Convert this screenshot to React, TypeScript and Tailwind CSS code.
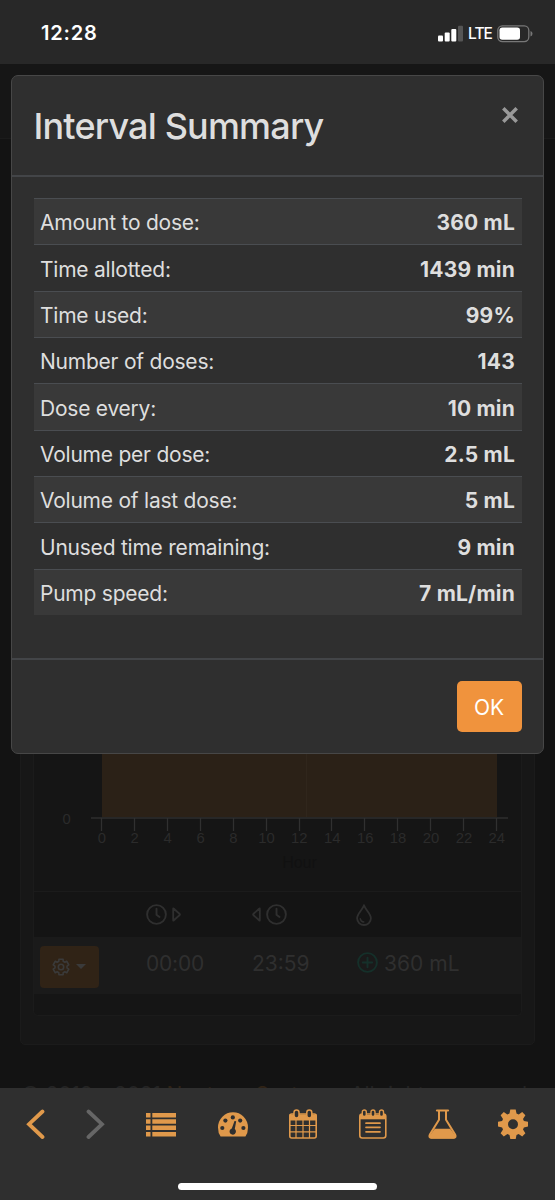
import React from "react";

const rows: [string, string][] = [
  ["Amount to dose:", "360 mL"],
  ["Time allotted:", "1439 min"],
  ["Time used:", "99%"],
  ["Number of doses:", "143"],
  ["Dose every:", "10 min"],
  ["Volume per dose:", "2.5 mL"],
  ["Volume of last dose:", "5 mL"],
  ["Unused time remaining:", "9 min"],
  ["Pump speed:", "7 mL/min"],
];

const hours = [0, 2, 4, 6, 8, 10, 12, 14, 16, 18, 20, 22, 24];

// Six-toothed outline of the settings cog, centred on the origin.
const cogPoints = Array.from({ length: 6 }, (_, i) => i * 60 - 90)
  .flatMap((a) => [
    [a - 21, 6.1],
    [a - 15, 8.1],
    [a + 15, 8.1],
    [a + 21, 6.1],
  ])
  .map(([a, r]) => {
    const t = (a * Math.PI) / 180;
    return `${(r * Math.cos(t)).toFixed(2)},${(r * Math.sin(t)).toFixed(2)}`;
  })
  .join(" ");

function Clock() {
  return (
    <svg width="21" height="21" viewBox="0 0 21 21" fill="none" stroke="currentColor" strokeWidth="1.900" strokeLinecap="round" className="shrink-0">
      <circle cx="10.500" cy="10.500" r="9.400" />
      <path d="M10.500 4.800v6l3 2.200" />
    </svg>
  );
}

function Caret({ className }: { className: string }) {
  return (
    <svg width="9" height="15" viewBox="0 0 9 15" fill="none" stroke="currentColor" strokeWidth="1.800" strokeLinejoin="round" className={className}>
      <path d="M1.200 1.500q0-.4.400 0L7.700 7q.4.500 0 1L1.600 13.500q-.4.400-.4 0Z" />
    </svg>
  );
}

function StatusBar() {
  return (
    <header className="flex h-16 shrink-0 items-start justify-between bg-[#282828] pl-[41px] pr-[22px] pt-5 text-white">
      <span className="text-[20px] font-semibold leading-[27px] tracking-[0.800px]">12:28</span>
      <div className="flex h-[27px] items-center">
        <svg width="26" height="17" viewBox="0 0 26 17" className="mr-[4px]">
          <rect x="0" y="10.5" width="5" height="6" rx="1" fill="#fff" />
          <rect x="6.7" y="7.5" width="5" height="9" rx="1" fill="#fff" />
          <rect x="13.3" y="4" width="5" height="12.5" rx="1" fill="#fff" />
          <rect x="20" y="0.7" width="5" height="15.8" rx="1" fill="#555" />
        </svg>
        <span className="w-[29px] text-[15.500px] font-medium leading-[27px] tracking-[-0.900px]">LTE</span>
        <svg width="36" height="18" viewBox="0 0 36 18">
          <rect x="0.8" y="0.8" width="31" height="15.8" rx="4.5" fill="none" stroke="#777" strokeWidth="1.3" />
          <rect x="2.5" y="2.5" width="20.5" height="12.3" rx="2.8" fill="#fff" />
          <path d="M33.5 6v5.500q2-.7 2-2.750T33.500 6Z" fill="#777" />
        </svg>
      </div>
    </header>
  );
}

function Chart() {
  return (
    <svg width="487" height="172" viewBox="34 720 487 172" className="block" fontFamily="Liberation Sans, sans-serif">
      <rect x="102" y="720" width="395" height="98" fill="#2b2117" />
      <path d="M306.500 720V818" stroke="#30261c" />
      <path d="M91 819H508" stroke="#2e2e2e" strokeWidth="1.600" />
      {hours.map((h) => (
        <React.Fragment key={h}>
          <path d={`M${Math.round(101 + h * 16.46) + 0.5} 819v13`} stroke="#303030" strokeWidth="1.300" />
          <text x={101.800 + h * 16.46} y="844" fontSize="14.800" textAnchor="middle" fill="#2b2b2b">
            {h}
          </text>
        </React.Fragment>
      ))}
      <text x="66.700" y="825.300" fontSize="14.800" textAnchor="middle" fill="#2b2b2b">0</text>
      <text x="299.500" y="869" fontSize="16" textAnchor="middle" fill="#111">Hour</text>
    </svg>
  );
}

function Page() {
  return (
    <div className="flex h-full flex-col bg-[#131313] text-[#2f2f2f]">
      <div className="h-[75px] shrink-0 border-b border-[#1b1b1b] bg-[#161616]" />
      <div className="mx-5 flex h-[906px] shrink-0 flex-col justify-end rounded-[5px] border border-[#1b1b1b] bg-[#171717] px-3 pb-[28px]">
        <div className="rounded-b-[5px] border border-t-0 border-[#1b1b1b] bg-[#151515]">
          <Chart />
          <div className="flex h-[46px] items-center border-t border-[#1b1b1b] bg-[#141414] pl-[112px]">
            <div className="flex w-[106px] items-center gap-[5px]">
              <Clock />
              <Caret className="shrink-0" />
            </div>
            <div className="flex w-[105px] items-center gap-[5px]">
              <Caret className="shrink-0 rotate-180" />
              <Clock />
            </div>
            <svg width="16" height="22" viewBox="0 0 16 22" fill="none" stroke="currentColor" strokeWidth="1.800" strokeLinejoin="round" strokeLinecap="round" className="-ml-px">
              <path d="M8 1.200C6.500 6 1.100 9.500 1.100 14.300a6.900 6.700 0 0 0 13.800 0C14.900 9.500 9.500 6 8 1.200Z" />
              <path d="M4.300 14.800q.6 2.900 3.500 3.200" strokeWidth="1.400" />
            </svg>
          </div>
          <div className="flex h-[57px] items-center bg-[#1a1a1a] pl-1.5 text-[21px]">
            <div className="mt-[2px] flex h-[42px] w-[59px] shrink-0 items-center rounded bg-[#302316] pl-[12px] text-[#3a3a3a]">
              <svg width="18" height="18" viewBox="-9 -9 18 18" fill="none" stroke="currentColor" strokeWidth="1.600" strokeLinejoin="round" className="shrink-0">
                <polygon points={cogPoints} />
                <circle r="2.700" />
              </svg>
              <span className="ml-[6px] h-0 w-0 border-x-[5px] border-t-[5px] border-x-transparent border-t-current" />
            </div>
            <span className="-mt-[4px] ml-[47px] w-[106px] tracking-[-0.200px]">00:00</span>
            <span className="-mt-[4px] w-[105px]">23:59</span>
            <svg width="21" height="21" viewBox="0 0 21 21" fill="none" stroke="#15302a" strokeWidth="1.900" strokeLinecap="round" className="-mt-[6px]">
              <circle cx="10.500" cy="10.500" r="9.400" />
              <path d="M10.500 5.800v9.400M5.800 10.500h9.400" />
            </svg>
            <span className="-mt-[4px] ml-[6px] tracking-[0.050px]">360 mL</span>
          </div>
          <div className="h-[21px]" />
        </div>
      </div>
      <p className="mt-[33px] shrink-0 whitespace-nowrap pl-[21px] text-[21px] leading-[34px] tracking-[-0.210px] text-[#242424]">
        © 2018 – 2021 <span className="text-[#302316]">Neptune Systems</span>. All rights reserved
      </p>
    </div>
  );
}

function SummaryModal() {
  return (
    <section className="absolute left-[11px] top-[11px] flex h-[679px] w-[533px] flex-col rounded-[7px] border border-[#474747] bg-[#2f2f2f] text-[#dedede]">
      <div className="flex h-[101px] shrink-0 items-start justify-between border-b-2 border-[#434548] pl-[21.500px] pr-[24px]">
        <h1 className="pt-[25px] text-[36px] font-medium leading-[50px] tracking-[-0.820px]">Interval Summary</h1>
        <svg width="18" height="18" viewBox="0 0 18 18" className="mt-[30px]">
          <path d="M2.300 2.300 15.700 15.700M15.700 2.300 2.300 15.700" stroke="#999" strokeWidth="3.500" />
        </svg>
      </div>
      <dl className="mx-[21.500px] mt-[21px] flex h-[417px] flex-col text-[21px]">
        {rows.map(([label, value]) => (
          <div
            key={label}
            className="flex flex-1 items-center justify-between border-t border-[#4a4d51] px-[6.500px] odd:bg-[#393939]"
          >
            <dt className="pt-[3px] tracking-[-0.230px]">{label}</dt>
            <dd className="pt-[3px] font-bold tracking-[0.200px]">{value}</dd>
          </div>
        ))}
      </dl>
      <div className="mt-[43px] flex flex-1 items-start justify-end border-t-2 border-[#434548] pr-[21.500px] pt-[21px]">
        <button className="h-[51px] w-[65px] rounded-[5px] bg-[#f0933d] pt-[2px] text-[21px] tracking-[-0.200px] text-white">OK</button>
      </div>
    </section>
  );
}

function Toolbar() {
  return (
    <footer className="flex h-28 shrink-0 flex-col items-center justify-between bg-[#2f2f2f] pb-[10px] pt-[21px]">
      <nav className="flex w-full items-center pl-[26px] text-[#e0994b]">
        <svg width="19" height="30" viewBox="0 0 19 30" className="mr-[41px]">
          <path d="M16.500 2.500 3 15.200 16.500 28" fill="none" stroke="currentColor" strokeWidth="3.800" strokeLinecap="round" />
        </svg>
        <svg width="19" height="30" viewBox="0 0 19 30" className="mr-[41px] text-[#666]">
          <path d="M2.500 2.500 16 15.200 2.500 28" fill="none" stroke="currentColor" strokeWidth="3.800" strokeLinecap="round" />
        </svg>
        <svg width="30" height="30" viewBox="0 0 30 30" fill="currentColor" className="mr-[41.500px]">
          <path d="M0 4h4.500v4.500H0zM6.300 4H30v4.500H6.300zM0 10.300h4.500v4.500H0zM6.300 10.300H30v4.500H6.300zM0 16.600h4.500v4.500H0zM6.300 16.600H30v4.500H6.300zM0 23h4.500v4.500H0zM6.300 23H30v4.500H6.300z" />
        </svg>
        <svg width="30" height="30" viewBox="0 0 30 30" className="mr-[41px]">
          <path d="M2.600 27.500Q0 24 0 18.500A15 15.300 0 0 1 30 18.500Q30 24 27.400 27.500Z" fill="currentColor" />
          <g fill="#2f2f2f">
            <circle cx="4.300" cy="19" r="2.100" />
            <circle cx="7.400" cy="11.600" r="2.100" />
            <circle cx="14.800" cy="8.400" r="2.100" />
            <circle cx="22.200" cy="11.600" r="2.100" />
            <circle cx="25.400" cy="19" r="2.100" />
            <path d="M16.500 12 18.200 12.300 16.800 20A3.200 3.200 0 1 1 13.800 19.400Z" />
          </g>
        </svg>
        <svg width="28" height="30" viewBox="0 0 28 30" className="mr-[42px]">
          <rect x="0.800" y="5" width="26.400" height="24" rx="2" fill="none" stroke="currentColor" strokeWidth="1.600" />
          <path d="M1 6h26v5H1zM7 11v18M14 11v18M20.500 11v18M1 16.500h26M1 22.800h26" fill="currentColor" stroke="currentColor" strokeWidth="1.200" />
          <rect x="5" y="1" width="5" height="8" rx="2.500" fill="#2f2f2f" stroke="currentColor" strokeWidth="1.500" />
          <rect x="17.800" y="1" width="5" height="8" rx="2.500" fill="#2f2f2f" stroke="currentColor" strokeWidth="1.500" />
        </svg>
        <svg width="28" height="30" viewBox="0 0 28 30" className="mr-[41px]">
          <rect x="0.800" y="5" width="26" height="24" rx="2.500" fill="none" stroke="currentColor" strokeWidth="1.600" />
          <path d="M1 6h25.800v4.300H1z" fill="currentColor" />
          <path d="M7 14.200h14M7 18.300h14M7 22.800h14" stroke="currentColor" strokeWidth="1.700" strokeLinecap="round" />
          <g fill="#2f2f2f" stroke="currentColor" strokeWidth="1.400">
            <rect x="3.300" y="1" width="4" height="6.500" rx="2" />
            <rect x="12" y="1" width="4" height="6.500" rx="2" />
            <rect x="20.500" y="1" width="4" height="6.500" rx="2" />
          </g>
        </svg>
        <svg width="30" height="30" viewBox="0 0 30 30" className="mr-[40.500px]" fill="none" stroke="currentColor">
          <path d="M9 1.500h11" strokeWidth="2.200" strokeLinecap="round" />
          <path d="M11 2v8.800L1.900 25.500q-1.400 3 1.300 3.300h22.600q2.700-.3 1.300-3.300L18 10.800V2" strokeWidth="2" />
          <path d="M6.800 19.700h15.400L28 27.500q-.5 2-2 2H3q-1.500 0-2-2Z" fill="currentColor" stroke="none" />
        </svg>
        <svg width="30" height="30" viewBox="0 0 30 30">
          <path
            fill="currentColor"
            fillRule="evenodd"
            d="M12.300.4h5.400l.8 4.100 2.200.9 3.500-2.400 3.200 3.200-2.400 3.700.9 2 4.100.8v4.900l-4.100.8-.9 2.200 2.400 3.600-3.200 3.200-3.600-2.400-2.100.9-.8 4.100h-5.400l-.8-4.100-2.100-.9-3.600 2.400-3.200-3.200L5 20.600l-.9-2.200L0 17.600v-4.900l4.100-.8.9-2-2.400-3.700L5.800 3l3.500 2.400 2.200-.9ZM15 10.200a5 5 0 1 0 0 10a5 5 0 1 0 0-10Z"
          />
        </svg>
      </nav>
      <div className="h-[7px] w-[199px] rounded-full bg-white" />
    </footer>
  );
}

export default function App() {
  return (
    <div className="flex h-[1200px] w-[555px] flex-col overflow-hidden bg-[#131313] font-['Inter','Liberation_Sans',sans-serif]">
      <StatusBar />
      <main className="relative h-[1024px] shrink-0 overflow-hidden">
        <Page />
        <SummaryModal />
      </main>
      <Toolbar />
    </div>
  );
}
